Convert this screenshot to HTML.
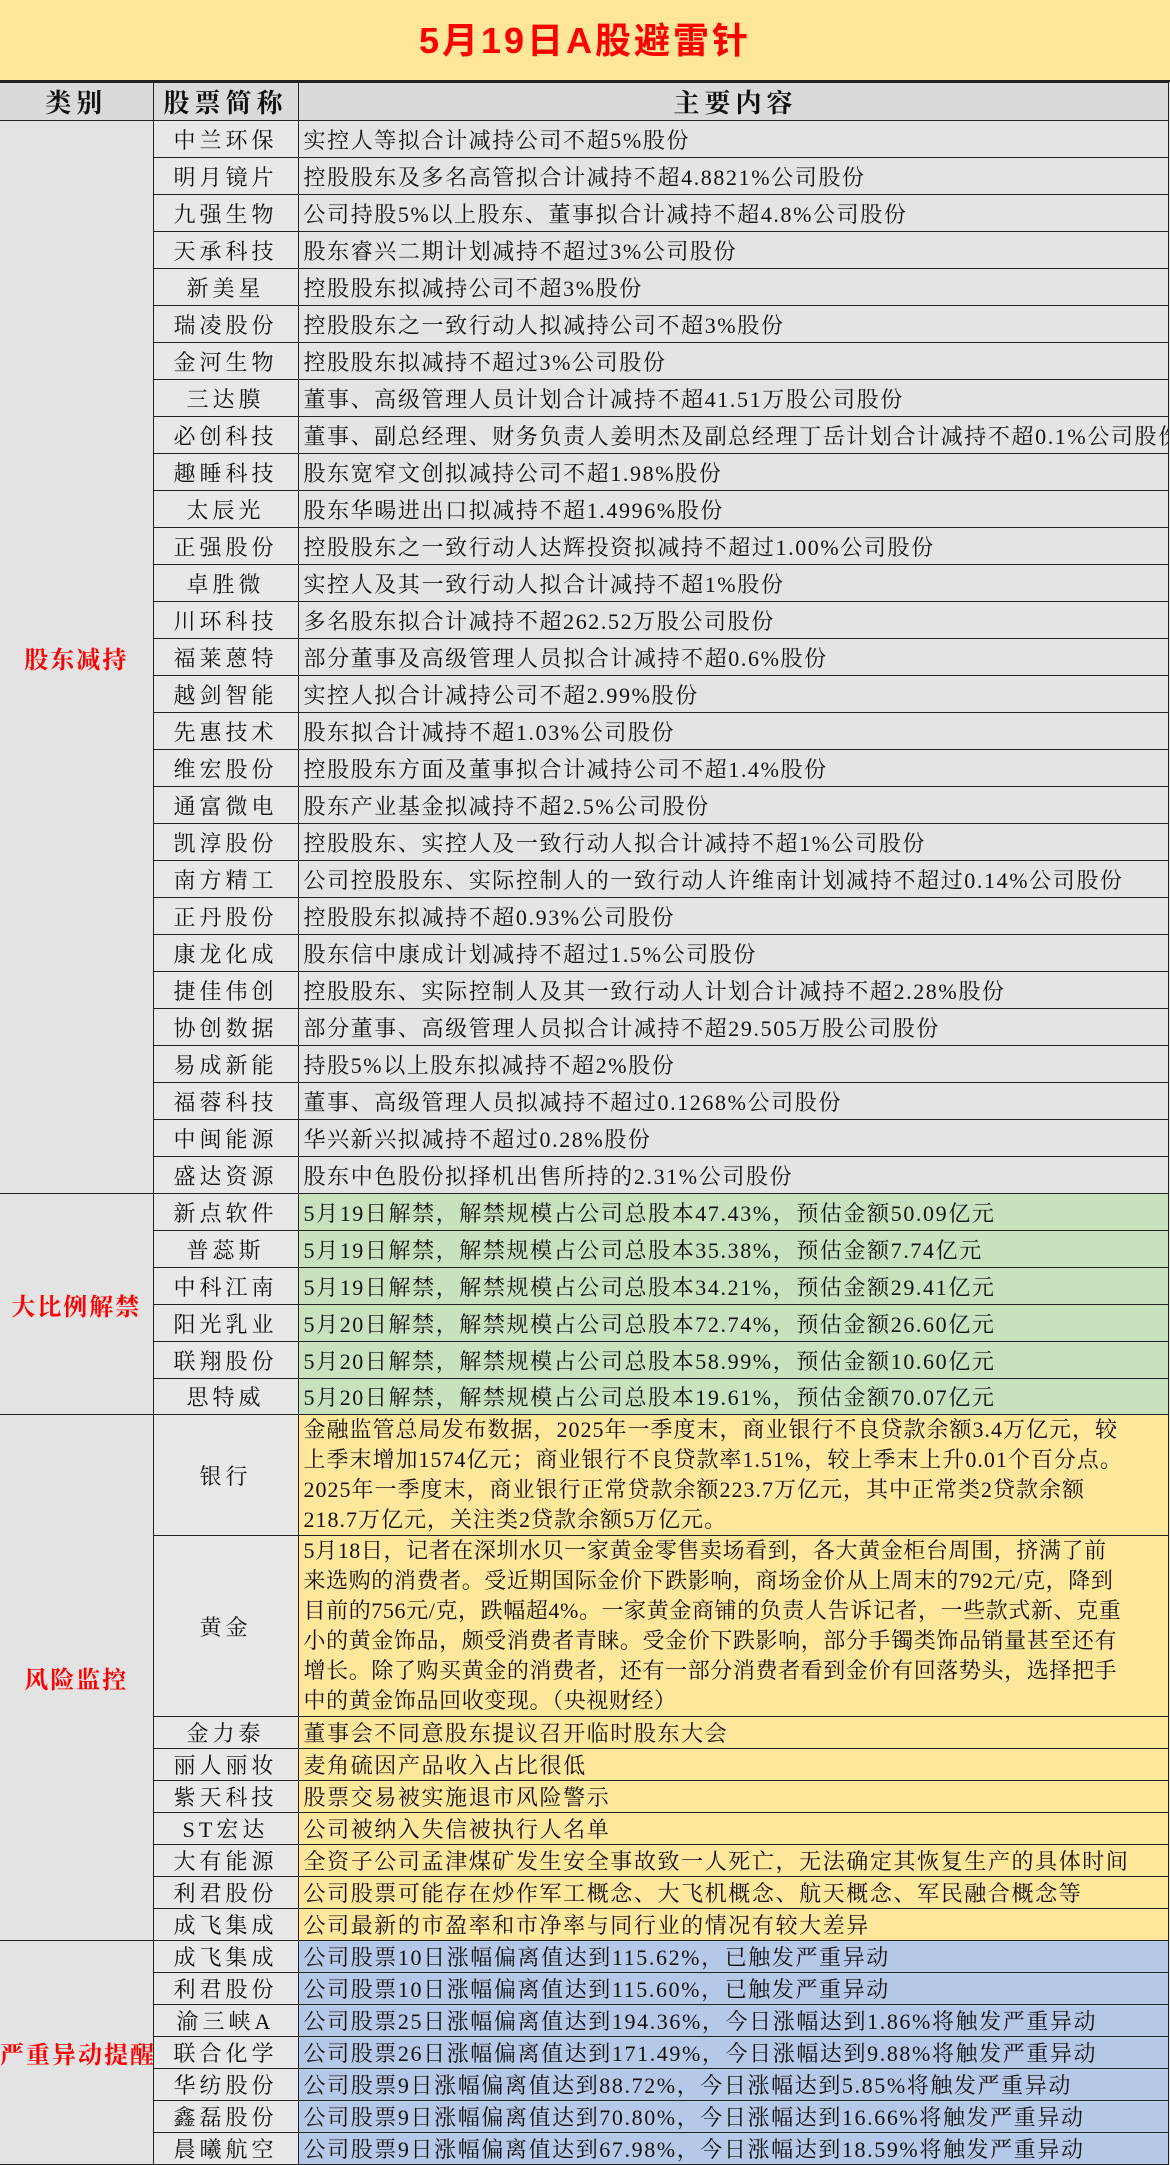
<!DOCTYPE html>
<html><head><meta charset="utf-8">
<style>
*{margin:0;padding:0;box-sizing:border-box}
body{width:1170px;height:2142px;background:#e6e6e6;font-family:"Liberation Serif","Noto Serif CJK SC",serif;color:#111;overflow:hidden}
.title{height:82px;background:#ffe699;border-bottom:2px solid #222;text-align:center;line-height:82px;color:#f00;font-size:36px;font-weight:bold;letter-spacing:3px;font-family:"Liberation Sans","Noto Sans CJK SC",sans-serif}
table{border-collapse:collapse;table-layout:fixed;width:1168px}
td{border:1.5px solid #222;overflow:hidden;white-space:nowrap;font-size:22px;letter-spacing:1.6px;vertical-align:middle}
td.c1{border-left:none;background:#e3e3e3;text-align:center;color:#f00;font-weight:bold;font-size:24px;letter-spacing:2px}
td.c2{background:#e8e8e8;text-align:center;letter-spacing:4px}
td.c3{padding-left:5px;background:#e4e4e4}
tr.h td{background:#dadada;font-weight:bold;font-size:26px;letter-spacing:5px;text-align:center;color:#111}
.g td.c3{background:#c9e2bd}
.y td.c3{background:#ffe79c}
.b td.c3{background:#b6c8e8}
td.m{line-height:30px;padding-top:0;letter-spacing:1px}
</style></head><body>
<div class="title">5月19日A股避雷针</div>
<table>
<colgroup><col style="width:153px"><col style="width:145px"><col style="width:870px"></colgroup>
<tr class="h" style="height:37px"><td class="c1" style="color:#111;background:#dadada">类别</td><td class="c2" style="background:#dadada">股票简称</td><td class="c3" style="background:#dadada">主要内容</td></tr>
<tr style="height:37px"><td class="c1" rowspan="29">股东减持</td><td class="c2">中兰环保</td><td class="c3">实控人等拟合计减持公司不超5%股份</td></tr>
<tr style="height:37px"><td class="c2">明月镜片</td><td class="c3">控股股东及多名高管拟合计减持不超4.8821%公司股份</td></tr>
<tr style="height:37px"><td class="c2">九强生物</td><td class="c3">公司持股5%以上股东、董事拟合计减持不超4.8%公司股份</td></tr>
<tr style="height:37px"><td class="c2">天承科技</td><td class="c3">股东睿兴二期计划减持不超过3%公司股份</td></tr>
<tr style="height:37px"><td class="c2">新美星</td><td class="c3">控股股东拟减持公司不超3%股份</td></tr>
<tr style="height:37px"><td class="c2">瑞凌股份</td><td class="c3">控股股东之一致行动人拟减持公司不超3%股份</td></tr>
<tr style="height:37px"><td class="c2">金河生物</td><td class="c3">控股股东拟减持不超过3%公司股份</td></tr>
<tr style="height:37px"><td class="c2">三达膜</td><td class="c3">董事、高级管理人员计划合计减持不超41.51万股公司股份</td></tr>
<tr style="height:37px"><td class="c2">必创科技</td><td class="c3">董事、副总经理、财务负责人姜明杰及副总经理丁岳计划合计减持不超0.1%公司股份</td></tr>
<tr style="height:37px"><td class="c2">趣睡科技</td><td class="c3">股东宽窄文创拟减持公司不超1.98%股份</td></tr>
<tr style="height:37px"><td class="c2">太辰光</td><td class="c3">股东华暘进出口拟减持不超1.4996%股份</td></tr>
<tr style="height:37px"><td class="c2">正强股份</td><td class="c3">控股股东之一致行动人达辉投资拟减持不超过1.00%公司股份</td></tr>
<tr style="height:37px"><td class="c2">卓胜微</td><td class="c3">实控人及其一致行动人拟合计减持不超1%股份</td></tr>
<tr style="height:37px"><td class="c2">川环科技</td><td class="c3">多名股东拟合计减持不超262.52万股公司股份</td></tr>
<tr style="height:37px"><td class="c2">福莱蒽特</td><td class="c3">部分董事及高级管理人员拟合计减持不超0.6%股份</td></tr>
<tr style="height:37px"><td class="c2">越剑智能</td><td class="c3">实控人拟合计减持公司不超2.99%股份</td></tr>
<tr style="height:37px"><td class="c2">先惠技术</td><td class="c3">股东拟合计减持不超1.03%公司股份</td></tr>
<tr style="height:37px"><td class="c2">维宏股份</td><td class="c3">控股股东方面及董事拟合计减持公司不超1.4%股份</td></tr>
<tr style="height:37px"><td class="c2">通富微电</td><td class="c3">股东产业基金拟减持不超2.5%公司股份</td></tr>
<tr style="height:37px"><td class="c2">凯淳股份</td><td class="c3">控股股东、实控人及一致行动人拟合计减持不超1%公司股份</td></tr>
<tr style="height:37px"><td class="c2">南方精工</td><td class="c3">公司控股股东、实际控制人的一致行动人许维南计划减持不超过0.14%公司股份</td></tr>
<tr style="height:37px"><td class="c2">正丹股份</td><td class="c3">控股股东拟减持不超0.93%公司股份</td></tr>
<tr style="height:37px"><td class="c2">康龙化成</td><td class="c3">股东信中康成计划减持不超过1.5%公司股份</td></tr>
<tr style="height:37px"><td class="c2">捷佳伟创</td><td class="c3">控股股东、实际控制人及其一致行动人计划合计减持不超2.28%股份</td></tr>
<tr style="height:37px"><td class="c2">协创数据</td><td class="c3">部分董事、高级管理人员拟合计减持不超29.505万股公司股份</td></tr>
<tr style="height:37px"><td class="c2">易成新能</td><td class="c3">持股5%以上股东拟减持不超2%股份</td></tr>
<tr style="height:37px"><td class="c2">福蓉科技</td><td class="c3">董事、高级管理人员拟减持不超过0.1268%公司股份</td></tr>
<tr style="height:37px"><td class="c2">中闽能源</td><td class="c3">华兴新兴拟减持不超过0.28%股份</td></tr>
<tr style="height:37px"><td class="c2">盛达资源</td><td class="c3">股东中色股份拟择机出售所持的2.31%公司股份</td></tr>
<tr class="g" style="height:37px"><td class="c1" rowspan="6">大比例解禁</td><td class="c2">新点软件</td><td class="c3">5月19日解禁，解禁规模占公司总股本47.43%，预估金额50.09亿元</td></tr>
<tr class="g" style="height:37px"><td class="c2">普蕊斯</td><td class="c3">5月19日解禁，解禁规模占公司总股本35.38%，预估金额7.74亿元</td></tr>
<tr class="g" style="height:37px"><td class="c2">中科江南</td><td class="c3">5月19日解禁，解禁规模占公司总股本34.21%，预估金额29.41亿元</td></tr>
<tr class="g" style="height:37px"><td class="c2">阳光乳业</td><td class="c3">5月20日解禁，解禁规模占公司总股本72.74%，预估金额26.60亿元</td></tr>
<tr class="g" style="height:37px"><td class="c2">联翔股份</td><td class="c3">5月20日解禁，解禁规模占公司总股本58.99%，预估金额10.60亿元</td></tr>
<tr class="g" style="height:36px"><td class="c2">思特威</td><td class="c3">5月20日解禁，解禁规模占公司总股本19.61%，预估金额70.07亿元</td></tr>
<tr class="y" style="height:120px"><td class="c1" rowspan="9">风险监控</td><td class="c2">银行</td><td class="c3 m">金融监管总局发布数据，2025年一季度末，商业银行不良贷款余额3.4万亿元，较<br>上季末增加1574亿元；商业银行不良贷款率1.51%，较上季末上升0.01个百分点。<br>2025年一季度末，商业银行正常贷款余额223.7万亿元，其中正常类2贷款余额<br>218.7万亿元，关注类2贷款余额5万亿元。</td></tr>
<tr class="y" style="height:181px"><td class="c2">黄金</td><td class="c3 m" style="letter-spacing:0.6px">5月18日，记者在深圳水贝一家黄金零售卖场看到，各大黄金柜台周围，挤满了前<br>来选购的消费者。受近期国际金价下跌影响，商场金价从上周末的792元/克，降到<br>目前的756元/克，跌幅超4%。一家黄金商铺的负责人告诉记者，一些款式新、克重<br>小的黄金饰品，颇受消费者青睐。受金价下跌影响，部分手镯类饰品销量甚至还有<br>增长。除了购买黄金的消费者，还有一部分消费者看到金价有回落势头，选择把手<br>中的黄金饰品回收变现。（央视财经）</td></tr>
<tr class="y" style="height:30px"><td class="c2">金力泰</td><td class="c3">董事会不同意股东提议召开临时股东大会</td></tr>
<tr class="y" style="height:30px"><td class="c2">丽人丽妆</td><td class="c3">麦角硫因产品收入占比很低</td></tr>
<tr class="y" style="height:30px"><td class="c2">紫天科技</td><td class="c3">股票交易被实施退市风险警示</td></tr>
<tr class="y" style="height:30px"><td class="c2">ST宏达</td><td class="c3">公司被纳入失信被执行人名单</td></tr>
<tr class="y" style="height:30px"><td class="c2">大有能源</td><td class="c3">全资子公司孟津煤矿发生安全事故致一人死亡，无法确定其恢复生产的具体时间</td></tr>
<tr class="y" style="height:30px"><td class="c2">利君股份</td><td class="c3">公司股票可能存在炒作军工概念、大飞机概念、航天概念、军民融合概念等</td></tr>
<tr class="y" style="height:30px"><td class="c2">成飞集成</td><td class="c3">公司最新的市盈率和市净率与同行业的情况有较大差异</td></tr>
<tr class="b" style="height:31px"><td class="c1" rowspan="7">严重异动提醒</td><td class="c2">成飞集成</td><td class="c3">公司股票10日涨幅偏离值达到115.62%，已触发严重异动</td></tr>
<tr class="b" style="height:31px"><td class="c2">利君股份</td><td class="c3">公司股票10日涨幅偏离值达到115.60%，已触发严重异动</td></tr>
<tr class="b" style="height:31px"><td class="c2">渝三峡A</td><td class="c3">公司股票25日涨幅偏离值达到194.36%，今日涨幅达到1.86%将触发严重异动</td></tr>
<tr class="b" style="height:31px"><td class="c2">联合化学</td><td class="c3">公司股票26日涨幅偏离值达到171.49%，今日涨幅达到9.88%将触发严重异动</td></tr>
<tr class="b" style="height:31px"><td class="c2">华纺股份</td><td class="c3">公司股票9日涨幅偏离值达到88.72%，今日涨幅达到5.85%将触发严重异动</td></tr>
<tr class="b" style="height:31px"><td class="c2">鑫磊股份</td><td class="c3">公司股票9日涨幅偏离值达到70.80%，今日涨幅达到16.66%将触发严重异动</td></tr>
<tr class="b" style="height:31px"><td class="c2">晨曦航空</td><td class="c3">公司股票9日涨幅偏离值达到67.98%，今日涨幅达到18.59%将触发严重异动</td></tr>
</table>
</body></html>
